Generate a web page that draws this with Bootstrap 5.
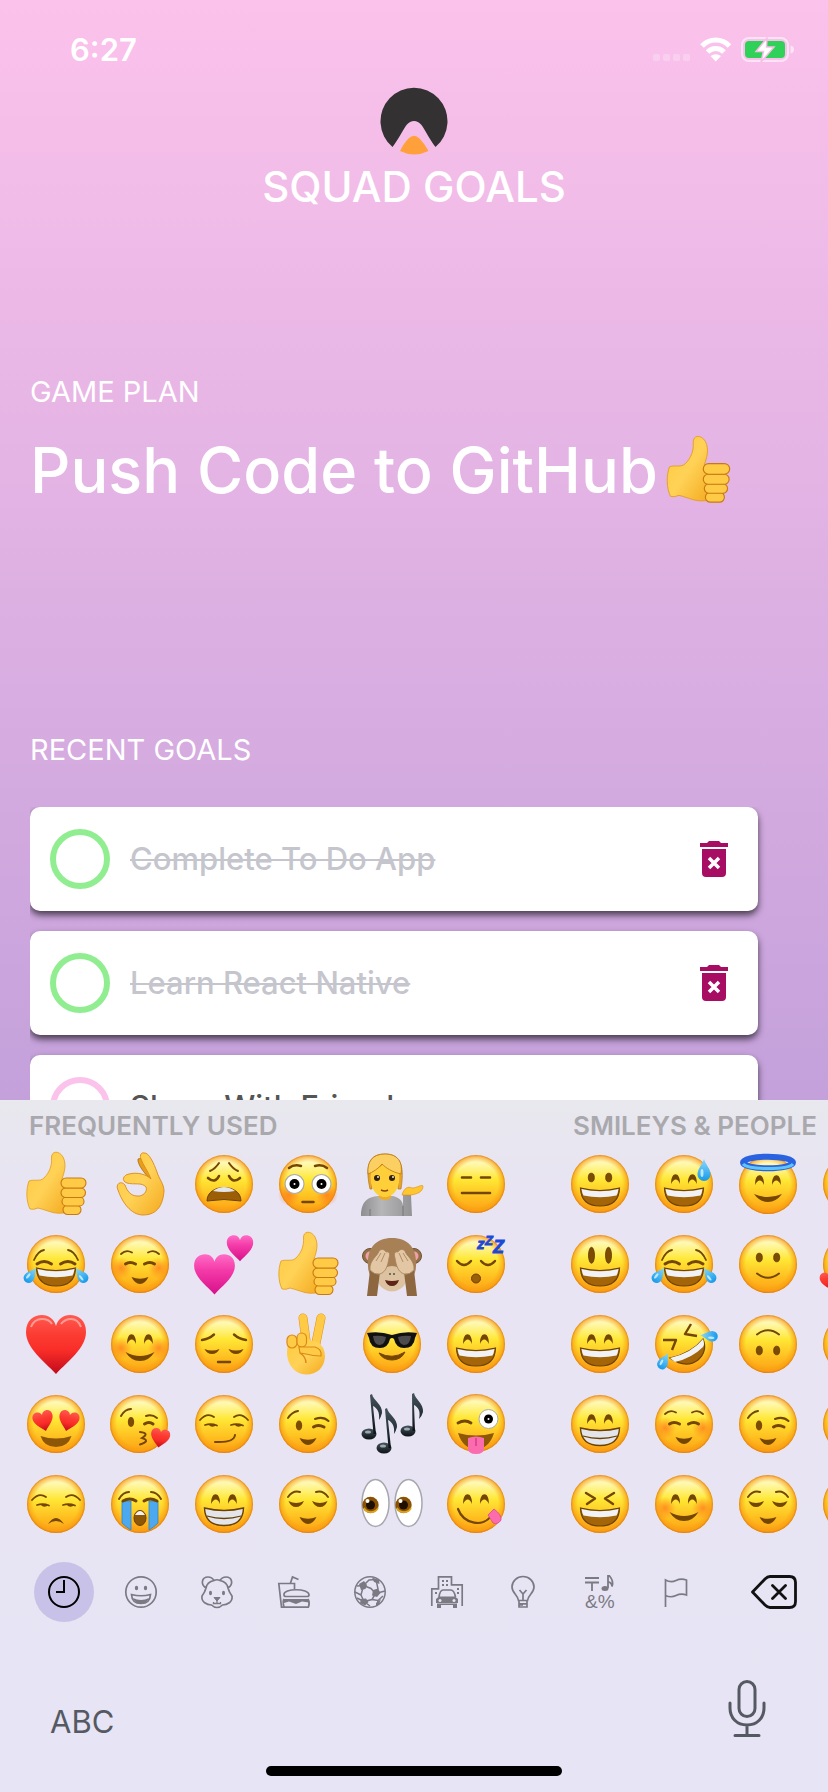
<!DOCTYPE html>
<html lang="en">
<head>
<meta charset="utf-8">
<meta name="viewport" content="width=device-width, initial-scale=1">
<title>Squad Goals</title>
<link href="https://cdn.jsdelivr.net/npm/bootstrap@5.3.0/dist/css/bootstrap.min.css" rel="stylesheet">
<style>
  body { font-family: Inter, "Liberation Sans", sans-serif; background: #a18cd1; }
  .app-screen { background: linear-gradient(#fbc2eb, #a18cd1); color: #fff; }
  .status-row { padding: 30px 34px 0 70px; line-height: 40px; font-size: 31px; font-weight: 600; }
  .brand-logo { margin-top: 17px; }
  .brand-name { font-size: 42px; line-height: 48px; font-weight: 500; margin: 8px 0 0; }
  .plan-block { padding: 163px 30px 0; }
  .section-label { font-size: 29px; line-height: 36px; font-weight: 400; margin: 0; }
  .plan-title { font-size: 63px; line-height: 80px; font-weight: 500; margin: 20px 0 0; white-space: nowrap; }
  .recent-block { padding: 222px 58px 0 30px; min-height: 0; }
  .goal-list { margin-top: 39px; padding-right: 12px; }
  .goal-card { flex: none; height: 104px; padding: 0 30px 0 20px; gap: 20px; border-radius: 10px; background: #fff; box-shadow: 0 4px 7px rgba(0,0,0,.65); }
  .goal-stack { gap: 20px; padding: 0; margin: 0; }
  .goal-check { appearance: none; flex: none; width: 60px; height: 60px; margin: 0; border: 6px solid #fbc2eb; border-radius: 50%; background: #fff; }
  .goal-check:checked { border-color: #90ee90; }
  .goal-text { font-size: 31px; line-height: 40px; font-weight: 500; color: #555; }
  .goal-check:checked + .goal-text { color: #c5c5cd; text-decoration: line-through; text-decoration-thickness: 2px; }
  .bare-btn { border: 0; background: none; padding: 0; display: flex; align-items: center; justify-content: center; flex: none; }
  .emoji-board { background: linear-gradient(#e8e8ee, #e8e4f3 90px, #e7e4f5); flex: none; }
  .emoji-panes { padding-left: 14px; gap: 40px; }
  .pane-title { margin: 0; padding: 8px 0 0 15px; height: 44px; font-size: 26px; line-height: 36px; font-weight: 600; color: #a9a9ad; white-space: nowrap; }
  .emoji-grid { display: grid; grid-template-columns: repeat(6, 84px); grid-auto-rows: 80px; }
  .emoji-grid svg { width: 72px; height: 72px; }
  .tab-row { margin-top: 18px; padding: 0 31px 0 34px; gap: 45px; }
  .tab-btn { width: 60px; height: 60px; border-radius: 50%; color: #7b7a83; }
  .tab-btn.is-on { background: #c9c2e8; color: #000; }
  .tab-btn svg { width: 32px; height: 32px; overflow: visible; }
  .bottom-row { padding: 58px 62px 0 50px; }
  .abc-btn { font-size: 31px; line-height: 32px; color: #555a62; }
  .home-bar { width: 296px; height: 10px; border-radius: 5px; background: #000; margin: 28px auto 16px; }
</style>
</head>
<body>

<!-- emoji artwork, centred on 0,0 -->
<svg width="0" height="0" class="position-absolute" aria-hidden="true">
  <defs>
    <linearGradient id="gFace" x1="0" y1="0" x2="0" y2="1"><stop offset="0" stop-color="#fffbe0"/><stop offset=".16" stop-color="#fff8a8"/><stop offset=".42" stop-color="#ffe735"/><stop offset=".75" stop-color="#ffbc1f"/><stop offset="1" stop-color="#fc9f14"/></linearGradient>
    <radialGradient id="gRim"><stop offset=".76" stop-color="#f79a10" stop-opacity="0"/><stop offset=".93" stop-color="#f79a10" stop-opacity=".6"/><stop offset="1" stop-color="#dc7610" stop-opacity=".9"/></radialGradient>
    <radialGradient id="gBlush"><stop offset="0" stop-color="#ff6a1a" stop-opacity=".65"/><stop offset="1" stop-color="#ff6a1a" stop-opacity="0"/></radialGradient>
    <linearGradient id="gDrop" x1="0" y1="0" x2="0" y2="1"><stop offset="0" stop-color="#8bd9fb"/><stop offset="1" stop-color="#1699ea"/></linearGradient>
    <linearGradient id="gRed" x1="0" y1="0" x2="0" y2="1"><stop offset="0" stop-color="#ff5a50"/><stop offset=".35" stop-color="#fb3b32"/><stop offset=".6" stop-color="#f92d28"/><stop offset="1" stop-color="#c00a1c"/></linearGradient>
    <linearGradient id="gPink" x1="0" y1="0" x2="0" y2="1"><stop offset="0" stop-color="#ff6cc6"/><stop offset=".4" stop-color="#f43aa8"/><stop offset="1" stop-color="#d8108a"/></linearGradient>
    <linearGradient id="gHand" x1="0" y1="0" x2="1" y2="1"><stop offset="0" stop-color="#ffc93c"/><stop offset=".5" stop-color="#ffd257"/><stop offset="1" stop-color="#f4a91e"/></linearGradient>
    <linearGradient id="gNote" x1="0" y1="0" x2="0" y2="1"><stop offset="0" stop-color="#46545e"/><stop offset="1" stop-color="#0c1216"/></linearGradient>
    <linearGradient id="gShirt"><stop offset="0" stop-color="#8e8e90"/><stop offset=".4" stop-color="#b6b6b8"/><stop offset="1" stop-color="#939395"/></linearGradient>

    <g id="face"><circle r="29" fill="url(#gFace)"/><circle r="29" fill="url(#gRim)"/></g>
    <g id="blush"><circle cx="-19" cy="4" r="11" fill="url(#gBlush)"/><circle cx="19" cy="4" r="11" fill="url(#gBlush)"/></g>
    <g id="eArch" fill="#754600"><path id="arch" d="M-12.8 0C-13.5-13-3.5-13-4 0C-6-6-10.500-6-12.800 0Z"/><use href="#arch" transform="scale(-1 1)"/></g>
    <g id="eOval" fill="#7d4c02" stroke="#5f3900" stroke-width=".8"><ellipse cx="-8.700" cy="-6.500" rx="3" ry="4.300"/><ellipse cx="8.700" cy="-6.500" rx="3" ry="4.300"/></g>
    <g id="mOpen"><path d="M-19.500 4Q0 9 19.500 4Q19 22 0 22Q-19 22-19.500 4Z" fill="#a36508" stroke="#6b4106" stroke-width="1.200"/><path d="M-18.500 5Q0 9.500 18.500 5Q18 9 16.500 11.500Q0 15-16.500 11.500Q-18 9-18.500 5Z" fill="#f1f2f5"/></g>
    <g id="mBeam"><path d="M-19.500 4Q0 9 19.500 4Q19 21.500 0 21.500Q-19 21.500-19.500 4Z" fill="#e3e5ea" stroke="#6b4106" stroke-width="1.400"/><path d="M-17 12Q0 17 17 12" fill="none" stroke="#6b4106" stroke-width="1.300"/></g>
    <path id="mSmall" d="M-8.500 13Q0 16.500 8.500 13Q5 20 0 20Q-5 20-8.500 13Z" fill="#754600"/>
    <g id="drop"><path d="M0-11C2-5 6.500-1 6.500 4.500A6.500 6.500 0 0 1-6.500 4.500C-6.500-1-2-5 0-11Z" fill="url(#gDrop)"/><ellipse cx="-2" cy="3" rx="1.500" ry="4" fill="#d9f5ff" opacity=".8"/></g>
    <path id="hrt" d="M0 30C-12 17-30 4-30-12C-30-24-22-29-14-29C-7-29-2-25 0-18C2-25 7-29 14-29C22-29 30-24 30-12C30 4 12 17 0 30Z"/>
    <g id="browsUp" fill="none" stroke="#754600" stroke-width="2" stroke-linecap="round"><path d="M-20-7Q-15-14-8-12M20-7Q15-14 8-12"/></g>
    <g id="sideEyes" fill="none" stroke="#754600" stroke-width="1.800" stroke-linecap="round"><path d="M-24-4Q-17-12-10-7M24-4Q17-12 10-7M-19 1Q-13-1-7 1.500M7 1Q13-1 19 1.500"/><path d="M-15 1h7a4 3.500 0 0 1-7 0M11 1h7a4 3.500 0 0 1-7 0" fill="#754600" stroke="none"/></g>

    <symbol id="e-grin" viewBox="-36 -36 72 72"><use href="#face"/><use href="#eOval"/><use href="#mOpen"/></symbol>
    <symbol id="e-smiley" viewBox="-36 -36 72 72"><use href="#face"/><g fill="#7d4c02" stroke="#5f3900" stroke-width=".8"><ellipse cx="-8.500" cy="-8.700" rx="3" ry="8"/><ellipse cx="8.500" cy="-8.700" rx="3" ry="8"/></g><use href="#mOpen"/></symbol>
    <symbol id="e-smile" viewBox="-36 -36 72 72"><use href="#face"/><use href="#eArch"/><use href="#mOpen"/></symbol>
    <symbol id="e-beam" viewBox="-36 -36 72 72"><use href="#face"/><use href="#eArch"/><use href="#mBeam"/></symbol>
    <symbol id="e-sweat" viewBox="-36 -36 72 72"><use href="#face"/><use href="#eArch"/><use href="#mOpen"/><use href="#drop" transform="translate(20 -14)"/></symbol>
    <symbol id="e-angel" viewBox="-36 -36 72 72"><g transform="translate(0 1)"><use href="#face"/><use href="#eArch"/><path d="M-14 9Q0 15 14 9Q8 17 0 17Q-8 17-14 9Z" fill="#754600"/></g><ellipse cy="-21.500" rx="25" ry="5.800" fill="none" stroke="#2a62e0" stroke-width="6"/><path d="M-25-20C-20-14 20-14 25-20" fill="none" stroke="#5fc4ff" stroke-width="3"/></symbol>
    <symbol id="e-joy" viewBox="-36 -36 72 72"><use href="#face"/><g fill="none" stroke="#754600" stroke-linecap="round"><path d="M-22-4Q-18-13-12-14M22-4Q18-13 12-14" stroke-width="1.800"/><path d="M-19 0Q-12-5-4.500 0M19 0Q12-5 4.500 0" stroke-width="3"/></g><use href="#mOpen"/><use href="#drop" transform="translate(-25 11) rotate(38) scale(.8)"/><use href="#drop" transform="translate(25 11) rotate(-38) scale(.8)"/></symbol>
    <symbol id="e-relaxed" viewBox="-36 -36 72 72"><use href="#face"/><use href="#blush"/><g fill="none" stroke="#754600" stroke-linecap="round"><path d="M-19-10Q-14-15-8-11.500M19-10Q14-15 8-11.500" stroke-width="1.800"/><path d="M-14.500 0Q-10-3-4.500 0M14.500 0Q10-3 4.500 0" stroke-width="3"/></g><use href="#mSmall"/></symbol>
    <symbol id="e-blush" viewBox="-36 -36 72 72"><use href="#face"/><use href="#blush"/><use href="#eArch"/><path d="M-14.500 8Q0 16 14.500 8Q9 17 0 17Q-9 17-14.500 8Z" fill="#754600"/></symbol>
    <symbol id="e-slight" viewBox="-36 -36 72 72"><use href="#face"/><use href="#eOval"/><path d="M-11 9.500Q0 18 11 9.500" fill="none" stroke="#754600" stroke-width="2" stroke-linecap="round"/></symbol>
    <symbol id="e-upside" viewBox="-36 -36 72 72"><use href="#face"/><g transform="scale(1 -1)"><use href="#eOval"/><path d="M-11 9.500Q0 18 11 9.500" fill="none" stroke="#754600" stroke-width="2" stroke-linecap="round"/></g></symbol>
    <symbol id="e-love" viewBox="-36 -36 72 72"><use href="#face"/><use href="#hrt" fill="url(#gRed)" transform="translate(-22 17) rotate(-12) scale(.32)"/></symbol>
    <symbol id="e-plain" viewBox="-36 -36 72 72"><use href="#face"/></symbol>
    <symbol id="e-wink" viewBox="-36 -36 72 72"><use href="#face"/><ellipse cx="-9" cy="1.500" rx="3.200" ry="5" fill="#7d4c02"/><g fill="none" stroke="#754600" stroke-width="2" stroke-linecap="round"><path d="M-20-6Q-16-12-10-13M7-5Q15-8 20.500-3"/><path d="M5.500 3Q10 0 16 3" stroke-width="3"/></g><use href="#mSmall" y="1"/></symbol>
    <symbol id="e-relieved" viewBox="-36 -36 72 72"><use href="#face"/><use href="#browsUp"/><path d="M-19.500-3Q-12 1-4-3Q-7 3-12 3Q-17 3-19.500-3ZM19.500-3Q12 1 4-3Q7 3 12 3Q17 3 19.500-3Z" fill="#754600"/><use href="#mSmall"/></symbol>
    <symbol id="e-laugh" viewBox="-36 -36 72 72"><use href="#face"/><path d="M-14-11L-5-5.500L-13 0M14-11L5-5.500L13 0" fill="none" stroke="#754600" stroke-width="2.400" stroke-linecap="round" stroke-linejoin="round"/><use href="#mOpen"/></symbol>
    <symbol id="e-rofl" viewBox="-36 -36 72 72"><use href="#face"/><path d="M-21-4H-8L-12 6M7-20L1-10L13-8" fill="none" stroke="#754600" stroke-width="2.400" stroke-linejoin="round"/><path d="M-14 14Q8 9 19-5Q24 7 14 16Q2 25-14 14Z" fill="#a36508" stroke="#6b4106" stroke-width="1.200"/><path d="M-14 14Q8 9 19-5Q21 0 19 3Q8 14-9 18Z" fill="#f1f2f5"/><use href="#drop" transform="translate(-20 17) rotate(28) scale(.8)"/><use href="#drop" transform="translate(25 -8) rotate(-85) scale(.8)"/></symbol>
    <symbol id="e-weary" viewBox="-36 -36 72 72"><use href="#face"/><g fill="none" stroke="#754600" stroke-width="2" stroke-linecap="round"><path d="M-14-13Q-9-15-5-21M14-13Q9-15 5-21"/><path d="M-16-6Q-9 0-5-8M16-6Q9 0 5-8" stroke-width="2.600"/></g><path d="M-17 17C-17-1 17-1 17 17Q0 14-17 17Z" fill="#9c5f08" stroke="#6b4106"/><path d="M-11 7Q0-1 11 7Q0 9-11 7Z" fill="#e4e6ea"/></symbol>
    <symbol id="e-flushed" viewBox="-36 -36 72 72"><use href="#face"/><use href="#blush" y="7"/><g fill="#fff" stroke="#a9a9a9" stroke-width="1.200"><circle cx="-13.500" r="9.500"/><circle cx="13.500" r="9.500"/></g><circle cx="-13.500" r="5"/><circle cx="13.500" r="5"/><circle cx="-13.500" r="1" fill="#fff"/><circle cx="13.500" r="1" fill="#fff"/><path d="M-19-16Q-14-20-7-18M19-16Q14-20 7-18M-5.500 18h11" fill="none" stroke="#754600" stroke-width="2.500" stroke-linecap="round"/></symbol>
    <symbol id="e-blank" viewBox="-36 -36 72 72"><use href="#face"/><path d="M-14-6.500h9M5-6.500h9M-14 9h28" stroke="#754600" stroke-width="2.600" stroke-linecap="round"/></symbol>
    <symbol id="e-sleep" viewBox="-36 -36 72 72"><use href="#face"/><path d="M-19-3Q-12 5-5-3M19-3Q12 5 5-3" fill="none" stroke="#754600" stroke-width="2.400" stroke-linecap="round"/><circle cy="14.500" r="4.500" fill="#9c5f08" stroke="#6b4106"/><g font-family="Liberation Sans, sans-serif" font-weight="700" font-style="italic" fill="#1d48d8" stroke="#1d48d8" stroke-width=".8"><text x="1" y="-15" font-size="15">z</text><text x="9" y="-19" font-size="13">Z</text><text x="17" y="-11" font-size="18">Z</text></g></symbol>
    <symbol id="e-pensive" viewBox="-36 -36 72 72"><use href="#face"/><path d="M-22-4Q-15-5-10-9.500M22-4Q15-5 10-9.500M-6 18h12" fill="none" stroke="#754600" stroke-width="2.400" stroke-linecap="round"/><path d="M-19.500 5Q-12 8-4.500 5Q-7 10-12 10Q-17 10-19.500 5ZM19.500 5Q12 8 4.500 5Q7 10 12 10Q17 10 19.500 5Z" fill="#754600"/></symbol>
    <symbol id="e-cool" viewBox="-36 -36 72 72"><use href="#face"/><path d="M-25-11Q-12-13 0-9Q12-13 25-11L23-6Q22 4 12 4Q4 4 2-5Q0-7-2-5Q-4 4-12 4Q-22 4-23-6Z" fill="#111"/><path d="M-19-8Q-12-9-6-7Q-7 0-12 1Q-18 1-19-8ZM6-7Q12-9 19-8Q18 1 12 1Q7 0 6-7Z" fill="#4c4c4c"/><path d="M-13 9Q0 16 13 8Q9 16 0 16Q-9 16-13 9Z" fill="#754600" stroke="#754600"/></symbol>
    <symbol id="e-hearteyes" viewBox="-36 -36 72 72"><use href="#face"/><use href="#hrt" fill="url(#gRed)" transform="translate(-12.500 -3) rotate(-14) scale(.34)"/><use href="#hrt" fill="url(#gRed)" transform="translate(12.500 -3) rotate(14) scale(.34)"/><path d="M-15.500 12Q0 17 15.500 12Q12 23 0 23Q-12 23-15.500 12Z" fill="#8e5707"/></symbol>
    <symbol id="e-kiss" viewBox="-36 -36 72 72"><use href="#face" x="-1"/><ellipse cx="-9" cy="-2" rx="3.200" ry="5" fill="#7d4c02"/><g fill="none" stroke="#754600" stroke-width="2" stroke-linecap="round"><path d="M-19-8Q-15-15-9-15M6-8Q12-10 17-6"/><path d="M4.500 0Q9-3 13 0" stroke-width="3"/><path d="M0 8Q10 9 2 14Q11 17 0 20.500"/></g><use href="#hrt" fill="url(#gRed)" transform="translate(20 14) rotate(10) scale(.32)"/></symbol>
    <symbol id="e-smirk" viewBox="-36 -36 72 72"><use href="#face"/><use href="#sideEyes"/><path d="M-9 18Q10 19 11 11" fill="none" stroke="#754600" stroke-width="2" stroke-linecap="round"/></symbol>
    <symbol id="e-unamused" viewBox="-36 -36 72 72"><use href="#face"/><use href="#sideEyes"/><path d="M-8 20Q0 8 8 20Q0 14-8 20Z" fill="#754600"/></symbol>
    <symbol id="e-zany" viewBox="-36 -36 72 72"><use href="#face" y="-1"/><path d="M-18-1Q-11-5-5-1" fill="none" stroke="#754600" stroke-width="2.800" stroke-linecap="round"/><circle cx="12.500" cy="-5" r="9.500" fill="#fff" stroke="#aaa"/><circle cx="12.500" cy="-5" r="4.500"/><circle cx="12.500" cy="-5" r="1" fill="#fff"/><path d="M-18 9Q0 14 18 9Q13 25 0 25Q-13 25-18 9Z" fill="#8e5707"/><path d="M-8 14Q0 11 8 14V24Q8 30 0 30Q-8 30-8 24Z" fill="#fb6cae"/><path d="M0 14v8" stroke="#d93d85" stroke-width="1.500"/></symbol>
    <symbol id="e-sob" viewBox="-36 -36 72 72"><use href="#face"/><path d="M-18-3h9v29q-5-3-9-7ZM9-3h9v22q-4 4-9 7Z" fill="#4ca8ef" stroke="#2c86d0" stroke-width=".8"/><g fill="none" stroke="#754600" stroke-linecap="round"><path d="M-21-5Q-17-12-11-12M21-5Q17-12 11-12" stroke-width="2"/><path d="M-17-3Q-10-7-4-3M17-3Q10-7 4-3" stroke-width="3"/></g><ellipse cy="14" rx="6" ry="7.500" fill="#8e5707" stroke="#6b4106"/><path d="M-5 11Q0 3 5 11Z" fill="#f1f2f5"/></symbol>
    <symbol id="e-yum" viewBox="-36 -36 72 72"><use href="#face"/><use href="#eArch"/><path d="M-18 5C-12 21 8 23 15 12" fill="none" stroke="#754600" stroke-width="2.200" stroke-linecap="round"/><path d="M12 11L18 5Q26 11 25 16Q22 21 17 19Z" fill="#fb6cae" stroke="#e0488e" stroke-width=".8"/></symbol>
    <symbol id="e-heart" viewBox="-36 -36 72 72"><use href="#hrt" fill="url(#gRed)"/><path d="M-25-17Q-22-25-14-25Q-7-25-4-20M5-20Q9-25 15-25Q22-25 25-17" stroke="#ffb0a8" stroke-width="2" fill="none" opacity=".8"/></symbol>
    <symbol id="e-hearts" viewBox="-36 -36 72 72"><use href="#hrt" fill="url(#gPink)" transform="translate(-9.500 10) scale(.68)"/><use href="#hrt" fill="url(#gPink)" transform="translate(16 -16) scale(.44)"/></symbol>
    <symbol id="e-thumb" viewBox="-36 -36 72 72"><path d="M-27-3C-22-5-16-2-12-6C-6-12-4-19-4.500-26C-5-33 3-34 7-27C11-19 8-11 6-5L12 0V28Q2 31-8 27Q-14 25-18 24Q-22 26-26 25C-30 17-30 5-27-3Z" fill="url(#gHand)" stroke="#e39a18" stroke-width=".8"/><g fill="#ffca45" stroke="#c87a12" stroke-width="1.100"><rect x="7" y="21" width="18" height="9.500" rx="4.700"/><rect x="6" y="13" width="22" height="9" rx="4.500"/><rect x="5" y="4" width="24.500" height="9.500" rx="4.700"/><rect x="5" y="-6" width="25" height="10" rx="5"/></g></symbol>
    <symbol id="e-ok" viewBox="-36 -36 72 72"><path d="M-2-25C-3-20 5-10 10-5L16-2L17-10C12-16 7-28-2-25Z" fill="#e89e1c" stroke="#a8690c" stroke-width=".8"/><path d="M4-31C9-32 14-20 17-12C19-5 24 0 24 7C23 20 18 31 3 31C-9 31-18 18-22 6C-25 0-19-4-15 1C-13 7-9 12-3 12C3 13 8 7 6 3C2-2-6 1-13-1C-19-3-17-9-11-10C-3-12 6-10 11-5C8-13 3-19 1-25C-1-29 2-32 4-31Z" fill="url(#gHand)" stroke="#d98a17" stroke-width=".9"/></symbol>
    <symbol id="e-peace" viewBox="-36 -36 72 72"><g stroke-linecap="round" stroke="#ffca45" stroke-width="8"><path d="M-5-26L-1 4" stroke="#df941a" stroke-width="9"/><path d="M-5-26L-1 4"/><path d="M13-26L7 4" stroke="#df941a" stroke-width="9"/><path d="M13-26L7 4"/></g><path d="M-20-2Q-10-8 9-2Q17 2 17 13C16 24 9 30.500-2 30.500C-14 30-21 20-21 8Z" fill="url(#gHand)"/><g fill="#ffcb46" stroke="#d98a17" stroke-width="1.200"><rect x="-21" y="-9" width="10" height="13" rx="5"/><rect x="-11" y="-11" width="9.500" height="14" rx="4.700"/><path d="M-9 3H7Q14 5 13 12Q5 12-2 10L-8 9Z"/></g><path d="M-8 9Q-2 13-2 19" fill="none" stroke="#d98a17" stroke-width="1.500"/></symbol>
    <symbol id="e-person" viewBox="-36 -36 72 72"><path d="M-31 32C-31 17-24 13-14 12H1C10 14 11 20 11 22V11H19L20 32Z" fill="url(#gShirt)"/><path d="M11 22V32M-22 25V32" stroke="#77777a"/><path d="M10 11C12 4 16 2 20 4C25 4 30 0 31 2C31 8 25 10 19 11Z" fill="#ffc62f" stroke="#dc9418" stroke-width=".7"/><path d="M-13 7H-1V14Q-7 18-13 14Z" fill="#f2ac20"/><path d="M-22 5C-26-14-26-30-7-30C11-30 12-14 9 5L6 5V-8H-20V5Z" fill="#e5a22c" stroke="#b9770f" stroke-width=".7"/><path d="M-21-12C-15-14-10-19-8-20C-3-14 4-13 7-12C9 4 2 13-7 13C-16 13-23 4-21-12Z" fill="#ffcf3a"/><path d="M-24-10C-25-22-20-30-7-30C6-30 11-22 9-10C0-12-6-16-10-20C-14-15-19-12-24-10Z" fill="#fbcf62" stroke="#b9770f" stroke-width=".8"/><circle cx="-15" cy="-6" r="3" fill="#33210d"/><circle cx="0" cy="-6" r="3" fill="#33210d"/><circle cx="-14" cy="-7" r=".9" fill="#fff"/><circle cx="1" cy="-7" r=".9" fill="#fff"/><path d="M-11 6Q-7 8-4 6" stroke="#8a4708" stroke-width="1.600" fill="none"/></symbol>
    <symbol id="e-monkey" viewBox="-36 -36 72 72"><g fill="#94704a" stroke="#71532f"><circle cx="-22" cy="-8" r="7.500"/><circle cx="22" cy="-8" r="7.500"/></g><circle cx="-22" cy="-8" r="4.500" fill="#f0a0a8"/><circle cx="22" cy="-8" r="4.500" fill="#f0a0a8"/><path d="M0-26C17-26 25-15 24 2C24 14 15 20 0 20C-15 20-24 14-24 2C-25-15-17-26 0-26Z" fill="#a88055"/><path d="M-13 8Q0-4 13 8Q17 20 8 25Q0 30-8 25Q-17 20-13 8Z" fill="#dcc2a0"/><path d="M-7 16Q0 18 7 16Q5 22 0 22Q-5 22-7 16Z" fill="#5d2418"/><circle cx="-2" cy="10" r="1" fill="#553"/><circle cx="2" cy="10" r="1" fill="#553"/><path d="M-25 32L-22 6L-12 8L-15 32ZM25 32L22 6L12 8L15 32Z" fill="#8d673f"/><g fill="#e3c6a3" stroke="#a37f58" stroke-width=".8"><path d="M-22 6C-23-4-14-8-13-13C-10-16-7-14-6-12C-2-13-2-9-3-6C-4 1-6 8-12 10Q-18 11-22 6Z"/><path d="M22 6C23-4 14-8 13-13C10-16 7-14 6-12C2-13 2-9 3-6C4 1 6 8 12 10Q18 11 22 6Z"/><path d="M-16-3L-11-11M-11-2L-7-11M16-3L11-11M11-2L7-11" fill="none"/></g></symbol>
    <symbol id="e-notes" viewBox="-36 -36 72 72"><g id="note1"><ellipse cx="-23" cy="10" rx="7.500" ry="5.500" fill="url(#gNote)"/><path d="M-20-30C-19-24-9-19-10-11Q-11-7-13-4C-12-12-15-16-19-18L-16 10H-18.500L-22-29Z" fill="url(#gNote)"/><ellipse cx="-24" cy="8" rx="3" ry="1.600" fill="#b6c2ca" opacity=".8"/></g><use href="#note1" x="15" y="14"/><g transform="translate(39 -3)"><ellipse cx="-23" cy="10" rx="7.500" ry="5.500" fill="url(#gNote)"/><path d="M-17-28C-16-22-7-17-8-9Q-9-5-12-2C-10-10-13-14-17-16L-16 10H-18.500L-19-27Z" fill="url(#gNote)"/><ellipse cx="-24" cy="8" rx="3" ry="1.600" fill="#b6c2ca" opacity=".8"/></g></symbol>
    <symbol id="e-eyes" viewBox="-36 -36 72 72"><g id="eye1"><ellipse cx="-16.500" cy="-1" rx="13.500" ry="23.500" fill="#fff" stroke="#a7a7ad" stroke-width="1.500"/><circle cx="-21.500" cy="1" r="8.200" fill="#8a5304"/><path d="M-28 4A8 8 0 0 0-14 4" fill="none" stroke="#e0a51c" stroke-width="1.600"/><circle cx="-21.500" cy="1" r="4.500" fill="#1e0f02"/><circle cx="-24.500" cy="-3" r="2" fill="#fff"/></g><use href="#eye1" x="33"/></symbol>
  </defs>
</svg>

<div class="app-screen vh-100 d-flex flex-column overflow-hidden">
  <header class="flex-shrink-0">
    <div class="status-row d-flex justify-content-between align-items-center">
      <span>6:27</span>
      <svg width="142" height="28" viewBox="652 36 142 28" aria-label="Signal, Wi-Fi and battery charging">
        <g fill="#fff" opacity=".25"><rect x="653" y="54" width="7" height="7" rx="2"/><rect x="663" y="54" width="7" height="7" rx="2"/><rect x="673" y="54" width="7" height="7" rx="2"/><rect x="683" y="54" width="7" height="7" rx="2"/></g>
        <g fill="none" stroke="#fff" stroke-width="5"><path d="M702 46A19 19 0 0 1 729.500 46"/><path d="M707.500 52A11.500 11.500 0 0 1 724 52"/></g><path d="M710.500 56Q715.700 52.500 721 56L715.700 61.500Z" fill="#fff"/>
        <rect x="742" y="38" width="46" height="23" rx="7" fill="none" stroke="#fff" stroke-width="2" opacity=".55"/><path d="M790.500 45.500Q794 46 794 49.500T790.500 53.500Z" fill="#fff" opacity=".55"/>
        <rect x="745" y="41" width="40" height="17" rx="4" fill="#30d158"/>
        <path d="M767 38L756 51.500H763.500L761 62L774 47H766.500Z" fill="#fff" stroke="#f7bfe8" stroke-width="1.500"/>
      </svg>
    </div>
    <div class="text-center">
      <svg class="brand-logo d-block mx-auto" width="68" height="68" viewBox="0 0 68 68" aria-hidden="true"><path d="M12.500 60A33.500 33.500 0 1 1 55.500 60C50 53 45 43 41.500 38Q38 34 34 34T26.500 38C23 43 18 53 12.500 60Z" fill="#343132"/><path d="M20 64Q24 56 28.500 51.500Q34 46 39.500 51.500Q44 56 48.500 64Q34 71 20 64Z" fill="#ffa03a"/></svg>
      <p class="brand-name">SQUAD GOALS</p>
    </div>
  </header>

  <section class="plan-block flex-shrink-0">
    <h2 class="section-label">GAME PLAN</h2>
    <h1 class="plan-title d-flex align-items-center">Push Code to GitHub<svg width="80" height="76" role="img" aria-label="thumbs up"><use href="#e-thumb"/></svg></h1>
  </section>

  <section class="recent-block d-flex flex-column flex-grow-1">
    <h2 class="section-label">RECENT GOALS</h2>
    <div class="goal-list overflow-hidden">
      <ul class="goal-stack d-flex flex-column list-unstyled">
        <li class="goal-card d-flex align-items-center">
          <input class="goal-check" type="checkbox" id="goal1" checked><label class="goal-text flex-grow-1" for="goal1">Complete To Do App</label>
          <button class="bare-btn" type="button" aria-label="Delete Complete To Do App"><svg width="28" height="36" viewBox="0 0 28 36"><path d="M0 2H7L9 0H19L21 2H28V6H0ZM2 8H26V32Q26 36 22 36H6Q2 36 2 32Z" fill="#a60d63"/><path d="M9 17L19 27M19 17L9 27" stroke="#fff" stroke-width="3.500"/></svg></button>
        </li>
        <li class="goal-card d-flex align-items-center">
          <input class="goal-check" type="checkbox" id="goal2" checked><label class="goal-text flex-grow-1" for="goal2">Learn React Native</label>
          <button class="bare-btn" type="button" aria-label="Delete Learn React Native"><svg width="28" height="36" viewBox="0 0 28 36"><path d="M0 2H7L9 0H19L21 2H28V6H0ZM2 8H26V32Q26 36 22 36H6Q2 36 2 32Z" fill="#a60d63"/><path d="M9 17L19 27M19 17L9 27" stroke="#fff" stroke-width="3.500"/></svg></button>
        </li>
        <li class="goal-card d-flex align-items-center">
          <input class="goal-check" type="checkbox" id="goal3"><label class="goal-text flex-grow-1" for="goal3">Share With Friends</label>
        </li>
      </ul>
    </div>
  </section>

  <section class="emoji-board" aria-label="Emoji keyboard">
    <div class="emoji-panes d-flex overflow-hidden">
      <div class="flex-shrink-0">
        <h3 class="pane-title">FREQUENTLY USED</h3>
        <div class="emoji-grid">
          <button class="bare-btn" type="button" aria-label="thumbs up"><svg><use href="#e-thumb"/></svg></button>
          <button class="bare-btn" type="button" aria-label="OK hand"><svg><use href="#e-ok"/></svg></button>
          <button class="bare-btn" type="button" aria-label="weary"><svg><use href="#e-weary"/></svg></button>
          <button class="bare-btn" type="button" aria-label="flushed"><svg><use href="#e-flushed"/></svg></button>
          <button class="bare-btn" type="button" aria-label="person tipping hand"><svg><use href="#e-person"/></svg></button>
          <button class="bare-btn" type="button" aria-label="expressionless"><svg><use href="#e-blank"/></svg></button>
          <button class="bare-btn" type="button" aria-label="tears of joy"><svg><use href="#e-joy"/></svg></button>
          <button class="bare-btn" type="button" aria-label="relaxed"><svg><use href="#e-relaxed"/></svg></button>
          <button class="bare-btn" type="button" aria-label="two hearts"><svg><use href="#e-hearts"/></svg></button>
          <button class="bare-btn" type="button" aria-label="thumbs up"><svg><use href="#e-thumb"/></svg></button>
          <button class="bare-btn" type="button" aria-label="see no evil"><svg><use href="#e-monkey"/></svg></button>
          <button class="bare-btn" type="button" aria-label="sleeping"><svg><use href="#e-sleep"/></svg></button>
          <button class="bare-btn" type="button" aria-label="red heart"><svg><use href="#e-heart"/></svg></button>
          <button class="bare-btn" type="button" aria-label="blush"><svg><use href="#e-blush"/></svg></button>
          <button class="bare-btn" type="button" aria-label="pensive"><svg><use href="#e-pensive"/></svg></button>
          <button class="bare-btn" type="button" aria-label="victory hand"><svg><use href="#e-peace"/></svg></button>
          <button class="bare-btn" type="button" aria-label="sunglasses"><svg><use href="#e-cool"/></svg></button>
          <button class="bare-btn" type="button" aria-label="smile"><svg><use href="#e-smile"/></svg></button>
          <button class="bare-btn" type="button" aria-label="heart eyes"><svg><use href="#e-hearteyes"/></svg></button>
          <button class="bare-btn" type="button" aria-label="blowing a kiss"><svg><use href="#e-kiss"/></svg></button>
          <button class="bare-btn" type="button" aria-label="smirk"><svg><use href="#e-smirk"/></svg></button>
          <button class="bare-btn" type="button" aria-label="wink"><svg><use href="#e-wink"/></svg></button>
          <button class="bare-btn" type="button" aria-label="musical notes"><svg><use href="#e-notes"/></svg></button>
          <button class="bare-btn" type="button" aria-label="winking with tongue"><svg><use href="#e-zany"/></svg></button>
          <button class="bare-btn" type="button" aria-label="unamused"><svg><use href="#e-unamused"/></svg></button>
          <button class="bare-btn" type="button" aria-label="sobbing"><svg><use href="#e-sob"/></svg></button>
          <button class="bare-btn" type="button" aria-label="beaming"><svg><use href="#e-beam"/></svg></button>
          <button class="bare-btn" type="button" aria-label="relieved"><svg><use href="#e-relieved"/></svg></button>
          <button class="bare-btn" type="button" aria-label="eyes"><svg><use href="#e-eyes"/></svg></button>
          <button class="bare-btn" type="button" aria-label="yum"><svg><use href="#e-yum"/></svg></button>
        </div>
      </div>
      <div class="flex-shrink-0">
        <h3 class="pane-title">SMILEYS &amp; PEOPLE</h3>
        <div class="emoji-grid" style="grid-template-columns: repeat(4, 84px)">
          <button class="bare-btn" type="button" aria-label="grinning"><svg><use href="#e-grin"/></svg></button>
          <button class="bare-btn" type="button" aria-label="grinning with sweat"><svg><use href="#e-sweat"/></svg></button>
          <button class="bare-btn" type="button" aria-label="halo"><svg><use href="#e-angel"/></svg></button>
          <button class="bare-btn" type="button" aria-label="smiling"><svg><use href="#e-plain"/></svg></button>
          <button class="bare-btn" type="button" aria-label="smiley"><svg><use href="#e-smiley"/></svg></button>
          <button class="bare-btn" type="button" aria-label="tears of joy"><svg><use href="#e-joy"/></svg></button>
          <button class="bare-btn" type="button" aria-label="slight smile"><svg><use href="#e-slight"/></svg></button>
          <button class="bare-btn" type="button" aria-label="smiling with hearts"><svg><use href="#e-love"/></svg></button>
          <button class="bare-btn" type="button" aria-label="smile"><svg><use href="#e-smile"/></svg></button>
          <button class="bare-btn" type="button" aria-label="rolling on the floor"><svg><use href="#e-rofl"/></svg></button>
          <button class="bare-btn" type="button" aria-label="upside down"><svg><use href="#e-upside"/></svg></button>
          <button class="bare-btn" type="button" aria-label="smiling"><svg><use href="#e-plain"/></svg></button>
          <button class="bare-btn" type="button" aria-label="beaming"><svg><use href="#e-beam"/></svg></button>
          <button class="bare-btn" type="button" aria-label="relaxed"><svg><use href="#e-relaxed"/></svg></button>
          <button class="bare-btn" type="button" aria-label="wink"><svg><use href="#e-wink"/></svg></button>
          <button class="bare-btn" type="button" aria-label="smiling"><svg><use href="#e-plain"/></svg></button>
          <button class="bare-btn" type="button" aria-label="laughing"><svg><use href="#e-laugh"/></svg></button>
          <button class="bare-btn" type="button" aria-label="blush"><svg><use href="#e-blush"/></svg></button>
          <button class="bare-btn" type="button" aria-label="relieved"><svg><use href="#e-relieved"/></svg></button>
          <button class="bare-btn" type="button" aria-label="smiling"><svg><use href="#e-plain"/></svg></button>
        </div>
      </div>
    </div>

    <div class="tab-row d-flex align-items-center">
      <nav class="d-flex flex-grow-1 justify-content-between" aria-label="Emoji categories">
        <button class="bare-btn tab-btn is-on" type="button" aria-label="Recent"><svg viewBox="0 0 32 32" fill="none" stroke="currentColor" stroke-width="2"><circle cx="16" cy="16" r="15"/><path d="M16 4V16H8"/></svg></button>
        <button class="bare-btn tab-btn" type="button" aria-label="Smileys"><svg viewBox="0 0 32 32" fill="none" stroke="currentColor" stroke-width="1.700"><circle cx="16" cy="16" r="15.200"/><path d="M6.500 18.500Q16 21 25.500 18.500Q25 27.500 16 27.500T6.500 18.500Z"/><path d="M8 22Q16 26 24 22Q22 27.500 16 27.500T8 22Z" fill="currentColor" stroke="none"/><ellipse cx="11.500" cy="12" rx="1.700" ry="2.200" fill="currentColor" stroke="none"/><ellipse cx="20.500" cy="12" rx="1.700" ry="2.200" fill="currentColor" stroke="none"/></svg></button>
        <button class="bare-btn tab-btn" type="button" aria-label="Animals"><svg viewBox="0 0 32 32" fill="none" stroke="currentColor" stroke-width="1.700"><path d="M5 12C-1 8 1 1 7 1Q11 1 13 4.500Q16 3 19 4.500Q21 1 25 1C31 1 33 8 27 12Q28 16 31 20C32 26 26 29 21.500 29Q19 31.500 16 31.500T10.500 29C6 29 0 26 1 20Q4 16 5 12Q6 6 13 4.500M19 4.500Q26 6 27 12"/><path d="M13 21.500H19L16 25Z" fill="currentColor" stroke-width="1"/><path d="M16 24V27.500M12.500 26V27.500H19.500V26" stroke-width="1.300"/><ellipse cx="9.500" cy="17" rx="1.500" ry="2.200" fill="currentColor" stroke="none"/><ellipse cx="22.500" cy="17" rx="1.500" ry="2.200" fill="currentColor" stroke="none"/></svg></button>
        <button class="bare-btn tab-btn" type="button" aria-label="Food"><svg viewBox="0 0 32 32" fill="none" stroke="currentColor" stroke-width="1.700"><path d="M16.500 13V7.500H.8L3.500 31.200H31M12.500 7L14.500 1L20.500 3.500M6 31C5 28 5 25 6 23M30 23Q32 27 30.500 31"/><path d="M6 19C5 12 31 12 31 19Q31 20.500 29 20.500H8Q6 20.500 6 19Z"/><path d="M6 23H31V26.500L24 25.500L18 28L11 25.500L6 27Z" fill="currentColor" stroke="none"/></svg></button>
        <button class="bare-btn tab-btn" type="button" aria-label="Activity"><svg viewBox="0 0 32 32" fill="none" stroke="currentColor" stroke-width="1.500"><circle cx="16" cy="16" r="15.200"/><path d="M9.500 9.500L17 12.500L21.500 17.500L18 23.500L10 25.500L7 19ZM9.500 9.500L15 4L22 3.500L24 13L21.500 17.500L31 15M9.500 9.500L3 10M7 19L1 16M18 23.500L24 24.500L29 20M24 24.500L23 30M10 25.500L16 30M10 25.500L3 22"/><path d="M5 8L10 5L13 9L11.500 13L7 14ZM18 1.500L25 4L25.500 8L20 6ZM19 14L24 12.500L26.500 17L23 21L18 19.500ZM7 23L12 22.500L14.500 26L11 29.500L6 27ZM22 27L27 23L25 28.500L22 30Z" fill="currentColor" stroke="none"/></svg></button>
        <button class="bare-btn tab-btn" type="button" aria-label="Travel"><svg viewBox="0 0 32 32" fill="none" stroke="currentColor" stroke-width="1.700"><path d="M.8 30V12.800H7.500V.8H20.500V8.800H31.200V30"/><path d="M11 5h2M15 5h2M11 9h2M15 9h2M4 17h2M26 17h2M26 13h2" stroke-width="2"/><path d="M8 21Q9 14 12 14H20Q23 14 24.500 21"/><path d="M5 23L8 20.500H24L27 23V27H5ZM6 28H10V32H6ZM22 28H26V32H22ZM6 27.500H26V29H6Z" fill="currentColor" stroke="none"/><circle cx="9" cy="24.500" r="1.500" fill="#e7e4f4" stroke="none"/><circle cx="23" cy="24.500" r="1.500" fill="#e7e4f4" stroke="none"/></svg></button>
        <button class="bare-btn tab-btn" type="button" aria-label="Objects"><svg viewBox="0 0 32 32" fill="none" stroke="currentColor" stroke-width="1.700"><path d="M11.500 24.500C11 19 5 17 5 11A11 10.500 0 0 1 27 11C27 17 21 19 20.500 24.500ZM12 24.500V31H20V24.500M12 27.800H20M16 24V18L12.500 14M16 18L19.500 14"/><path d="M12 28.500H16" stroke-width="2.500"/></svg></button>
        <button class="bare-btn tab-btn" type="button" aria-label="Symbols"><svg viewBox="0 0 32 32" fill="none" stroke="currentColor" stroke-width="1.800"><path d="M1 2H15M1 6.500H15M8 6.500V15"/><path d="M24 12V0H25.500Q30 5 28 10.500Q28 7 24 5.500"/><ellipse cx="21" cy="12.500" rx="3.500" ry="2.500" fill="currentColor" stroke="none"/><text x="1" y="31.500" font-size="19" font-family="Liberation Sans, sans-serif" fill="currentColor" stroke="none">&amp;%</text></svg></button>
        <button class="bare-btn tab-btn" type="button" aria-label="Flags"><svg viewBox="0 0 32 32" fill="none" stroke="currentColor" stroke-width="1.700"><path d="M5.500 31V4Q11 7 16 4.500T26.500 4V19Q21 17 16 19.500T5.500 19.500"/></svg></button>
      </nav>
      <button class="bare-btn" type="button" aria-label="Delete"><svg width="46" height="34" viewBox="0 0 46 34" fill="none" stroke="#111" stroke-width="2.800" stroke-linejoin="round" stroke-linecap="round"><path d="M1.500 17L14 4Q16.500 1.500 19 1.500H38.500Q44.500 1.500 44.500 7.500V26.500Q44.500 32.500 38.500 32.500H19Q16.500 32.500 14 30ZM21.500 10.500L34.500 23.500M34.500 10.500L21.500 23.500"/></svg></button>
    </div>

    <div class="bottom-row d-flex justify-content-between align-items-end">
      <button class="bare-btn abc-btn" type="button">ABC</button>
      <button class="bare-btn" type="button" aria-label="Dictate"><svg width="38" height="58" viewBox="0 0 38 58" fill="none" stroke="#555a62" stroke-width="3" stroke-linecap="round"><rect x="11" y="1.500" width="16" height="35" rx="8"/><path d="M2 23V28C2 38 9 45 19 45S36 38 36 28V23M19 45V55.500M7 55.500H31"/></svg></button>
    </div>
    <div class="home-bar"></div>
  </section>
</div>
<script src="https://cdn.jsdelivr.net/npm/bootstrap@5.3.0/dist/js/bootstrap.bundle.min.js"></script>
</body>
</html>
